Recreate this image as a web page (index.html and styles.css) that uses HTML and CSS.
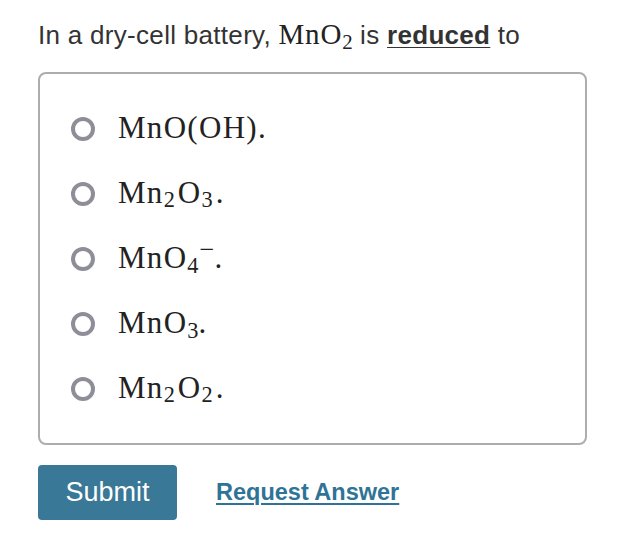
FILE: index.html
```html
<!DOCTYPE html>
<html>
<head>
<meta charset="utf-8">
<link rel="stylesheet" href="styles.css">
</head>
<body>
<div class="page">
  <p class="question">In a dry-cell battery, <span class="math q-math">MnO<sub>2</sub></span> is <span class="em">reduced</span> to</p>
  <div class="choices">
    <label class="choice"><span class="radio"></span><span class="math">MnO(OH).</span></label>
    <label class="choice"><span class="radio"></span><span class="math">Mn<sub class="gap">2</sub>O<sub class="gap">3</sub>.</span></label>
    <label class="choice"><span class="radio"></span><span class="math">MnO<sub>4</sub><sup>−</sup>.</span></label>
    <label class="choice"><span class="radio"></span><span class="math">MnO<sub>3</sub>.</span></label>
    <label class="choice"><span class="radio"></span><span class="math">Mn<sub class="gap">2</sub>O<sub class="gap">2</sub>.</span></label>
  </div>
  <div class="actions">
    <button class="submit">Submit</button>
    <a class="request" href="#">Request Answer</a>
  </div>
</div>
</body>
</html>
```

FILE: styles.css
```css
html, body {
  margin: 0;
  padding: 0;
  background: #ffffff;
}

.page {
  padding: 19px 0 0 38px;
  width: 549px;
  font-family: "Liberation Sans", Arial, sans-serif;
  color: #333333;
}

.question {
  margin: 0;
  font-size: 26px;
  line-height: 30px;
  letter-spacing: 0.3px;
  white-space: nowrap;
}

.math {
  font-family: "Liberation Serif", "Times New Roman", serif;
  color: #222222;
}

.q-math {
  font-size: 29px;
  letter-spacing: 0.8px;
}

.math sub,
.math sup {
  font-size: 0.72em;
  line-height: 0;
  letter-spacing: 0;
}

.math sub {
  vertical-align: -0.22em;
}

.math sup {
  font-size: 0.85em;
  vertical-align: 0.38em;
  margin-left: 1px;
}

.math sub.gap {
  margin-right: 3px;
}

.em {
  font-weight: bold;
  text-decoration: underline;
  text-underline-offset: 3px;
  text-decoration-thickness: 1px;
}

.choices {
  margin-top: 22px;
  border: 2px solid #adadad;
  border-radius: 8px;
  padding: 22px 0 22px 31px;
  display: flex;
  flex-direction: column;
  height: 325px;
}

.choice {
  height: 65px;
  display: flex;
  align-items: center;
  gap: 23px;
}

.choice .math {
  font-size: 31px;
  letter-spacing: 1.3px;
  position: relative;
  top: -1px;
}

.radio {
  width: 16px;
  height: 16px;
  border: 4px solid #8e8e99;
  border-radius: 50%;
  background: #fff;
  flex: none;
}

.actions {
  margin-top: 20px;
  display: flex;
  align-items: center;
  gap: 39px;
}

.submit {
  width: 139px;
  height: 55px;
  border: none;
  border-radius: 4px;
  background: #397896;
  color: #ffffff;
  font-family: "Liberation Sans", Arial, sans-serif;
  font-size: 27px;
  padding: 0;
}

.request {
  color: #2f7496;
  font-weight: bold;
  font-size: 23.5px;
  text-decoration: underline;
  text-underline-offset: 3px;
  text-decoration-thickness: 1.5px;
}
```
